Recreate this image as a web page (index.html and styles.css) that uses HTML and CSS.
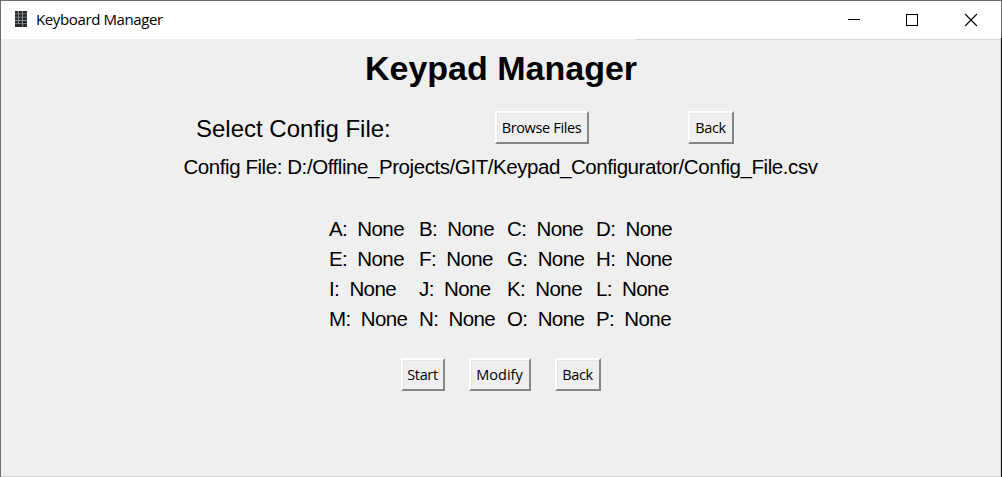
FILE: index.html
```html
<!DOCTYPE html>
<html lang="en">
<head>
<meta charset="utf-8">
<title>Keyboard Manager</title>
<link rel="stylesheet" href="styles.css">
</head>
<body>
<div class="window">
  <header class="titlebar">
    <svg class="app-icon" width="14" height="18" viewBox="0 0 14 18">
      <path fill="#8b8b8b" d="M1 1h12v16H1z"/>
      <path fill="#262a2c" d="M1 1h3v2.500H1zM5 1h3v2.500H5zM9 1h4v2.500H9zM1 4.300h3v2.500H1zM5 4.300h3v2.500H5zM9 4.300h4v2.500H9zM1 7.600h3v2.500H1zM5 7.600h3v2.500H5zM9 7.600h4v2.500H9zM1 10.900h3v2.300H1zM5 10.900h3v2.300H5zM9 10.900h4v2.300H9zM1 14h7.300v3H1zM9.300 14H13v3H9.300z"/>
    </svg>
    <span class="caption">Keyboard Manager</span>
    <svg class="controls" width="138" height="38" viewBox="0 0 138 38" fill="none" stroke="#000" shape-rendering="crispEdges">
      <path d="M17 18.500h12"/>
      <path d="M75.500 13.500h11v11h-11z"/>
      <path shape-rendering="auto" stroke-width="1.1" d="M134 13l12 12M146 13l-12 12"/>
    </svg>
  </header>
  <main class="content">
    <h1 class="heading">Keypad Manager</h1>
    <div class="picker">
      <span class="prompt">Select Config File:</span>
      <button class="btn browse">Browse Files</button>
      <button class="btn back">Back</button>
    </div>
    <div class="path">Config File: D:/Offline_Projects/GIT/Keypad_Configurator/Config_File.csv</div>
    <div class="keys">
      <span>A:  None</span><span>B:  None</span><span>C:  None</span><span>D:  None</span>
      <span>E:  None</span><span>F:  None</span><span>G:  None</span><span>H:  None</span>
      <span>I:  None</span><span>J:  None</span><span>K:  None</span><span>L:  None</span>
      <span>M:  None</span><span>N:  None</span><span>O:  None</span><span>P:  None</span>
    </div>
    <div class="actions">
      <button class="btn start">Start</button>
      <button class="btn modify">Modify</button>
      <button class="btn back">Back</button>
    </div>
  </main>
</div>
</body>
</html>
```
FILE: styles.css
```css
* { box-sizing: border-box; }
body { margin: 0; overflow: hidden; }
.window {
  width: 1002px;
  height: 477px;
  display: flex;
  flex-direction: column;
  background: linear-gradient(#6e6e6e 37px, #111 37px) right / 1px 100% no-repeat, #efefef;
  border-top: 1px solid #6b6b6b;
  border-left: 1px solid #6e6e6e;
  padding-right: 1px;
  color: #000;
}
.titlebar {
  height: 39px;
  flex: none;
  display: flex;
  align-items: flex-start;
  background: linear-gradient(#d5d5d5, #d5d5d5) right bottom / 365px 1px no-repeat, linear-gradient(#efefef, #efefef) left bottom / 100% 1px no-repeat, #fff;
}
.app-icon { margin: 9px 0 0 13px; }
.caption {
  margin: 7px auto 0 8px;
  font: 15px/22px "Open Sans", sans-serif;
  letter-spacing: -0.38px;
  white-space: nowrap;
}
.controls { margin-right: 32px; overflow: visible; }
.content {
  flex: 1;
  border-right: 1px solid #d5d5d5;
  border-bottom: 1px solid #d0d0d0;
  font-family: "Liberation Sans", Arial, sans-serif;
}
.heading {
  margin: 8px 0 0 1px;
  text-align: center;
  font-size: 34px;
  line-height: 40px;
}
.picker {
  display: flex;
  align-items: center;
  height: 33px;
  margin: 23px 0 0 195px;
}
.prompt { width: 299px; padding-top: 2px; font-size: 24px; white-space: nowrap; }
.btn {
  height: 33px;
  padding: 0 1px 0 0;
  border: 2px solid;
  border-color: #fff #858585 #858585 #fff;
  border-radius: 0;
  background: #efefef;
  box-shadow: inset 1px 1px #e5e5e5;
  color: #000;
  font: 14.5px/28px "Open Sans", sans-serif;
  letter-spacing: -0.35px;
  white-space: nowrap;
}
.browse { width: 94px; margin-right: 99px; }
.back { width: 46px; }
.start { width: 44px; }
.modify { width: 62px; letter-spacing: 0; }
.path {
  margin-top: 11px;
  text-align: center;
  font-size: 20.5px;
  line-height: 24px;
  letter-spacing: -0.43px;
  white-space: nowrap;
}
.keys {
  display: grid;
  grid-template-columns: 90px 88px 89px 90px;
  grid-auto-rows: 30px;
  margin: 35px 0 0 328px;
  font-size: 20.5px;
  line-height: 30px;
  letter-spacing: -0.6px;
  white-space: pre;
}
.actions {
  display: flex;
  gap: 24px;
  margin: 24px 0 0 400px;
}
.actions .btn { line-height: 27px; }
```
